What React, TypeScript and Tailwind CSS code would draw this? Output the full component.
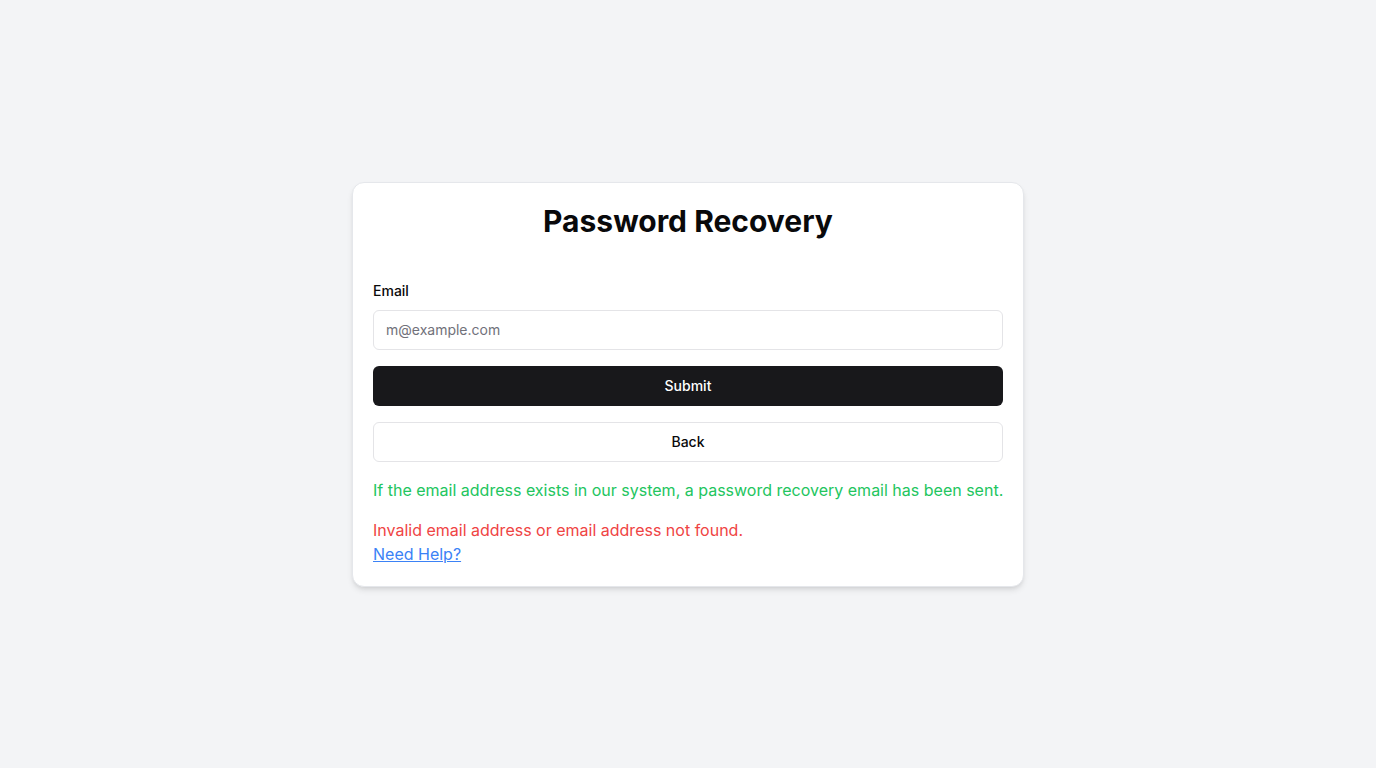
import React from "react";

export default function App() {
  return (
    <div
      className="min-h-screen w-full bg-[#f3f4f6] flex items-center justify-center"
      style={{ fontFamily: "Inter, 'Noto Sans', sans-serif" }}
    >
      <div className="w-full max-w-2xl bg-white border border-gray-200 rounded-xl shadow-md p-5">
        <h1 className="text-3xl leading-9 font-bold text-center text-[#09090b] mb-[42px]">
          Password Recovery
        </h1>
        <label className="block text-sm leading-5 font-medium text-[#09090b] mb-[9px]">Email</label>
        <input
          type="email"
          placeholder="m@example.com"
          className="block w-full h-10 rounded-md border border-[#e4e4e7] bg-white px-3 text-sm text-[#09090b] placeholder:text-[#71717a] outline-none"
        />
        <button className="mt-4 w-full h-10 rounded-md bg-[#18181b] text-white text-sm font-medium">
          Submit
        </button>
        <button className="mt-4 w-full h-10 rounded-md border border-[#e4e4e7] bg-white text-[#09090b] text-sm font-medium">
          Back
        </button>
        <p className="mt-4 text-base leading-6 text-[#22c55e] whitespace-nowrap">
          If the email address exists in our system, a password recovery email has been sent.
        </p>
        <p className="mt-4 text-base leading-6 text-[#ef4444]">
          Invalid email address or email address not found.
        </p>
        <a href="#" className="block w-fit text-base leading-6 text-[#3b82f6] underline">
          Need Help?
        </a>
      </div>
    </div>
  );
}
